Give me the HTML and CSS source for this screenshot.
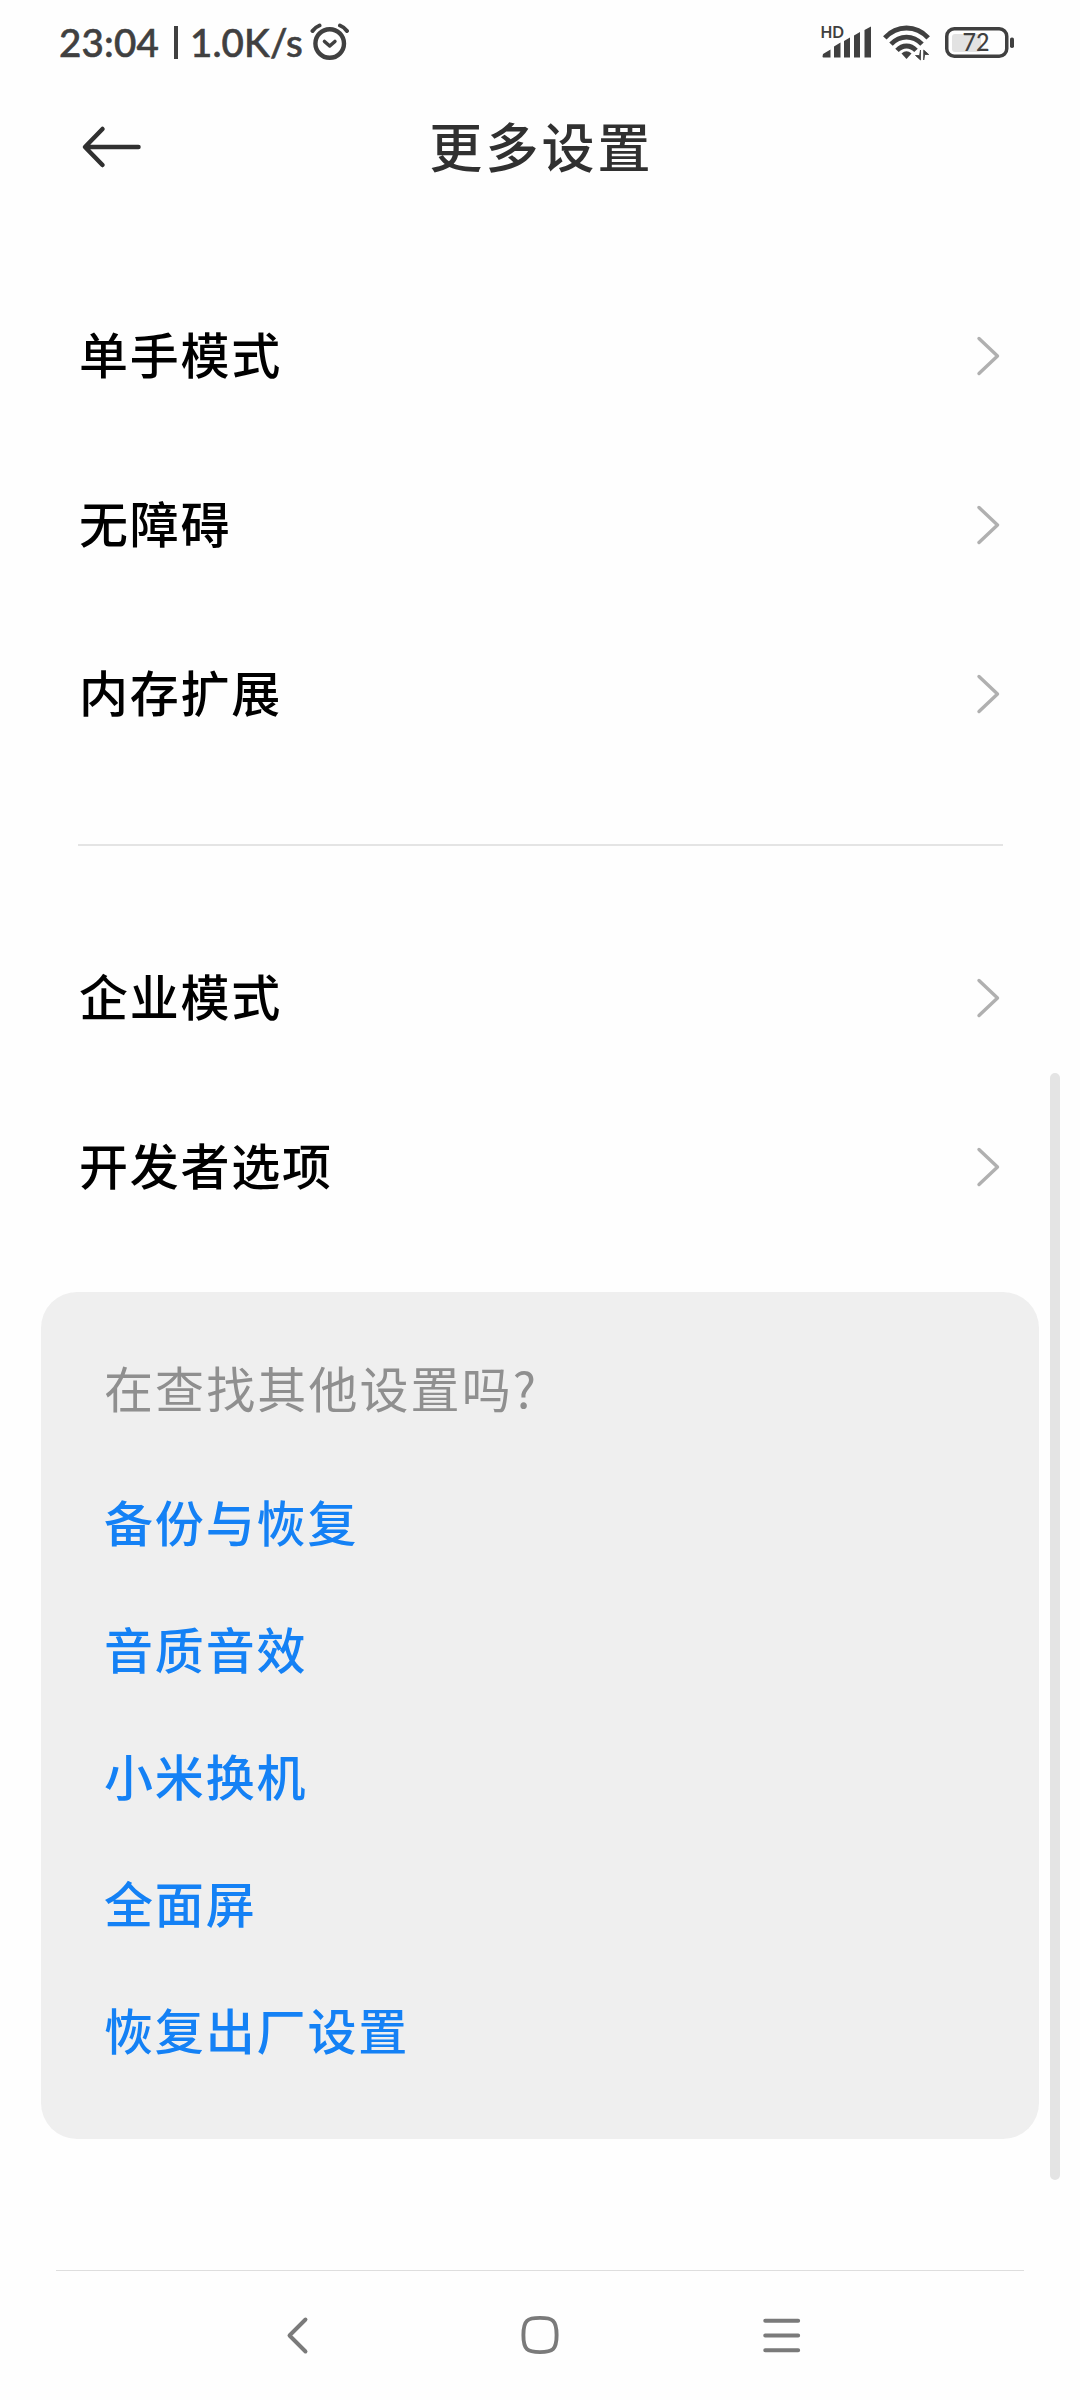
FILE: index.html
```html
<!DOCTYPE html>
<html lang="zh-CN">
<head>
<meta charset="utf-8">
<title>更多设置</title>
<link rel="stylesheet" href="styles.css">
</head>
<body>
<div class="screen">
  <header class="status">
    <div class="status-left">
      <span class="clock">23:04</span><span class="bar"></span><span class="speed">1.0K/s</span>
      <svg class="alarm" width="40" height="38" viewBox="0 0 40 38" fill="none" stroke="#404040" stroke-width="4.400" stroke-linecap="round" stroke-linejoin="round">
        <circle cx="19.700" cy="20.500" r="14.300"/>
        <path d="M14.500 18.500l5.200 4.500 5.200-4.500" stroke-width="3.600"/>
        <path d="M2.500 8q3-4 7-5.500M37 8q-3-4-7-5.500" stroke-width="4"/>
      </svg>
    </div>
    <div class="status-right">
      <svg class="signal" width="52" height="42" viewBox="0 -6 52 42">
        <text class="hd" x="0.500" y="14" textLength="23.500" lengthAdjust="spacingAndGlyphs">HD</text>
        <path fill="#404040" d="M3 30l7.500-4.500v8H3.500q-1 0-1-1zM14 22.500l6.500-4v15H14zM24 17l6-3.500v20h-6zM34 11.500L40 8v25.500h-6zM44.500 6L51 2.500v31h-6.500z"/>
      </svg>
      <svg class="wifi" width="48" height="37" viewBox="0 0 48 37" fill="none" stroke="#404040" stroke-width="4.800">
        <path d="M1.800 13.800C14 .700 33 .700 45.200 13.800"/>
        <path d="M8 20.200c9-9.500 22-9.500 31 0"/>
        <path d="M14 26.400c5.500-5.900 13.500-5.900 19 0"/>
        <path d="M18.500 29.500q5-4.500 10 0l-5 5.500z" fill="#404040" stroke="none"/>
        <path d="M37.500 26v10L32.500 31.500h4zM40.700 36V26l5 4.500h-4z" fill="#404040" stroke="#404040" stroke-width=".8"/>
      </svg>
      <svg class="battery" width="70" height="32" viewBox="0 0 70 32">
        <rect x="7" y="7" width="29" height="18" rx="3" fill="#e2e2e2"/>
        <rect x="1.750" y="1.750" width="60" height="27.500" rx="7.500" fill="none" stroke="#404040" stroke-width="3.500"/>
        <rect x="65" y="10.500" width="4" height="10.500" rx="1.800" fill="#404040"/>
        <text class="pct" x="17.500" y="24.300" textLength="27" lengthAdjust="spacingAndGlyphs">72</text>
      </svg>
    </div>
  </header>

  <div class="titlebar">
    <svg class="back" width="60" height="48" viewBox="0 0 60 48" fill="none" stroke="#303030" stroke-width="4.500" stroke-linecap="round" stroke-linejoin="round"><path d="M21.500 6L4 24 21.500 42M4.500 24h53"/></svg>
    <h1>更多设置</h1>
  </div>

  <main>
    <ul class="list first">
      <li><span>单手模式</span><svg class="chev" width="24" height="42" viewBox="0 0 24 42"><path d="M3 3.500L21.500 21 3 38.500"/></svg></li>
      <li><span>无障碍</span><svg class="chev" width="24" height="42" viewBox="0 0 24 42"><path d="M3 3.500L21.500 21 3 38.500"/></svg></li>
      <li><span>内存扩展</span><svg class="chev" width="24" height="42" viewBox="0 0 24 42"><path d="M3 3.500L21.500 21 3 38.500"/></svg></li>
    </ul>
    <div class="divider"></div>
    <ul class="list">
      <li><span>企业模式</span><svg class="chev" width="24" height="42" viewBox="0 0 24 42"><path d="M3 3.500L21.500 21 3 38.500"/></svg></li>
      <li><span>开发者选项</span><svg class="chev" width="24" height="42" viewBox="0 0 24 42"><path d="M3 3.500L21.500 21 3 38.500"/></svg></li>
    </ul>
    <section class="card">
      <p>在查找其他设置吗?</p>
      <a>备份与恢复</a>
      <a>音质音效</a>
      <a>小米换机</a>
      <a>全面屏</a>
      <a>恢复出厂设置</a>
    </section>
  </main>

  <nav class="nav">
    <svg width="48" height="48" viewBox="0 0 48 48"><path d="M30.500 8.500L14.500 24.500l16 16"/></svg>
    <svg width="48" height="48" viewBox="0 0 48 48"><path d="M24 6.900C36.500 6.900 40.600 9 40.600 24S36.500 41.100 24 41.100 7.400 39 7.400 24 11.500 6.900 24 6.900z"/></svg>
    <svg width="48" height="48" viewBox="0 0 48 48"><path d="M7.200 9.700h33M7.200 24.500h33M7.200 39.300h33"/></svg>
  </nav>
  <div class="scrollbar"></div>
</div>
</body>
</html>
```
FILE: styles.css
```css
* { box-sizing: border-box; margin: 0; padding: 0; }
body { background: #fefefe; font-family: "Noto Sans CJK SC", sans-serif; }
.screen { position: relative; width: 1080px; height: 2400px; display: flex; flex-direction: column; }

.status { height: 84px; display: flex; justify-content: space-between; padding: 0 65px 0 59px; font-family: Lato, sans-serif; color: #404040; }
.status-left { display: flex; align-items: center; font-size: 38.500px; font-weight: 500; -webkit-text-stroke: 0.600px #404040; }
.clock { width: 100px; letter-spacing: 0.200px; }
.bar { width: 4px; height: 33px; margin-left: 15px; background: #404040; }
.speed { margin-left: 12px; width: 120px; letter-spacing: 0.100px; }
.status-right { display: flex; align-items: flex-start; }
.signal { margin-top: 18px; }
.hd { font: 700 17px Lato, sans-serif; fill: #404040; }
.wifi { margin: 24px 0 0 11px; }
.battery { margin: 27px 0 0 14px; }
.pct { font: 500 24px Lato, sans-serif; fill: #404040; }

.titlebar { height: 126px; display: grid; grid-template-columns: 200px 1fr 200px; align-items: center; }
.back { margin-left: 81px; }
h1 { padding: 0 0 4px 3px; font-size: 53px; line-height: 80px; font-weight: 500; letter-spacing: 3.100px; color: #303030; text-align: center; }

.list { list-style: none; padding: 0 80px 0 79px; }
.first { padding-top: 61px; }
.list li { height: 169px; display: flex; align-items: center; justify-content: space-between; font-size: 49px; line-height: 74px; font-weight: 500; letter-spacing: 1.750px; color: #000; }
.list span { padding-bottom: 6px; }
.chev { fill: none; stroke: #b0b0b0; stroke-width: 3.400; stroke-linecap: round; stroke-linejoin: round; }
.divider { height: 2px; margin: 66px 77px 67px 78px; background: #e4e4e4; }

.card { margin: 41px 41px 0; height: 847px; padding: 31px 0 0 63px; border-radius: 36px; background: #efefef; display: flex; flex-direction: column; font-size: 49px; letter-spacing: 1.850px; }
.card p { height: 127px; line-height: 127px; letter-spacing: 2.100px; color: #8f8f8f; }
.card a { height: 127px; line-height: 127px; font-weight: 500; color: #1481f5; }
.card p + a { margin-top: 7px; }

.nav { margin: 131px 56px 0; height: 130px; border-top: 1px solid #dedede; display: flex; justify-content: center; gap: 193.500px; padding-top: 40px; }
.nav svg { fill: none; stroke: #7a7a7a; stroke-width: 3.900; stroke-linecap: round; stroke-linejoin: round; }
.scrollbar { position: absolute; left: 1050px; top: 1073px; width: 10px; height: 1107px; border-radius: 5px; background: #e4e4e4; }
```
